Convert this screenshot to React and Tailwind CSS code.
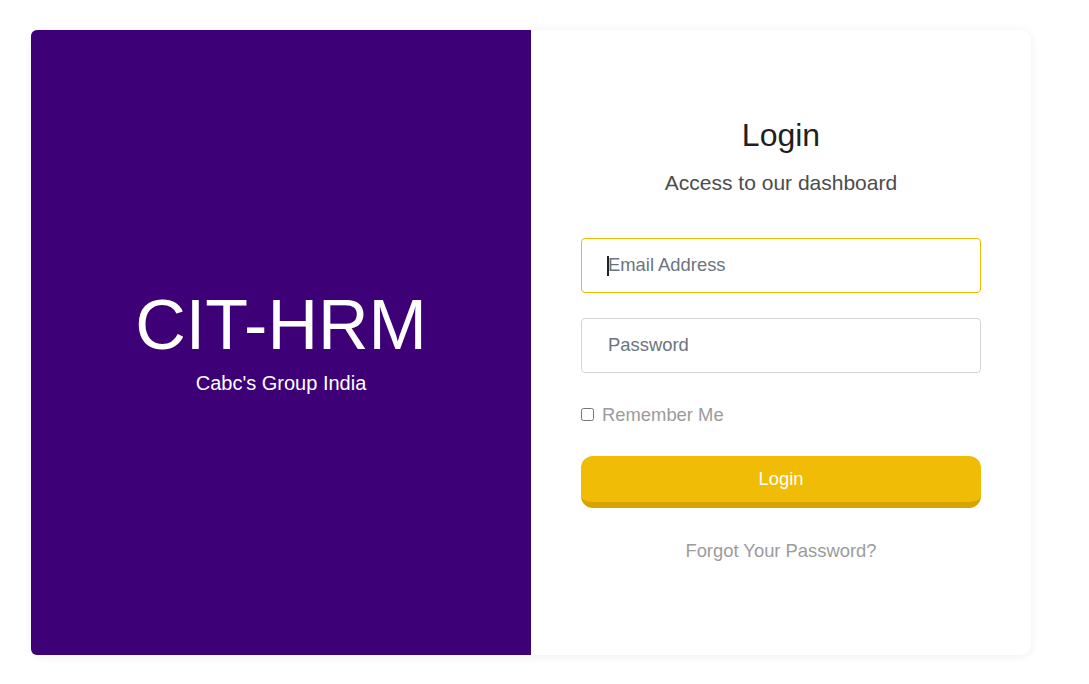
import React from 'react';

const App = () => {
    return (
        <div className="min-h-screen bg-white pt-[30px] pl-[31px]" style={{ fontFamily: '"Liberation Sans", Arial, sans-serif' }}>
            <div className="flex w-[1000px] h-[625px] rounded-[10px] shadow-[0_1px_10px_rgba(0,0,0,0.07)]">
                {/* Brand side */}
                <div className="w-[500px] bg-[#3d0077] rounded-l-[6px] flex flex-col items-center justify-center pb-[8px] text-white">
                    <h1 className="text-[70px] leading-[1.2]">CIT-HRM</h1>
                    <p className="text-[20px] leading-[1.2] mt-[4px]">Cabc's Group India</p>
                </div>

                {/* Form side */}
                <div className="flex-1 bg-white rounded-r-[10px] flex flex-col items-center pt-[86px]">
                    <h3 className="text-[32px] leading-[1.2] text-[#1f1f1f]">Login</h3>
                    <p className="text-[21px] leading-[1.2] text-[#4c4c4c] mt-[16px]">Access to our dashboard</p>

                    <form className="w-[400px] mt-[42px]" onSubmit={e => e.preventDefault()}>
                        <div className="relative">
                            <input
                                type="email"
                                placeholder="Email Address"
                                className="w-full h-[55px] rounded-[4px] border border-[#f0bc00] px-[26px] text-[18.4px] text-[#333] outline-none placeholder:text-[#6c757d]"
                            />
                            <span className="absolute top-[18px] w-[2px] h-[20px] bg-[#222]" style={{ left: 26 }} />
                        </div>
                        <input
                            type="password"
                            placeholder="Password"
                            className="mt-[25px] w-full h-[55px] rounded-[4px] border border-[#d4d4d4] px-[26px] text-[18.4px] text-[#333] outline-none placeholder:text-[#6c757d]"
                        />
                        <label className="mt-[31px] flex items-center gap-[8px] text-[18.4px] leading-[1.2] text-[#9b9b9b]">
                            <input type="checkbox" className="w-[13px] h-[13px] m-0" />
                            Remember Me
                        </label>
                        <button
                            type="submit"
                            className="mt-[30px] w-full h-[52px] rounded-[12px] bg-[#f0bc06] border-b-[6px] border-[#d6a300] text-white text-[18.4px]"
                        >
                            Login
                        </button>
                        <div className="mt-[32px] text-center text-[18.4px] leading-[1.2] text-[#9b9b9b]">
                            Forgot Your Password?
                        </div>
                    </form>
                </div>
            </div>
        </div>
    );
};

export default App;
